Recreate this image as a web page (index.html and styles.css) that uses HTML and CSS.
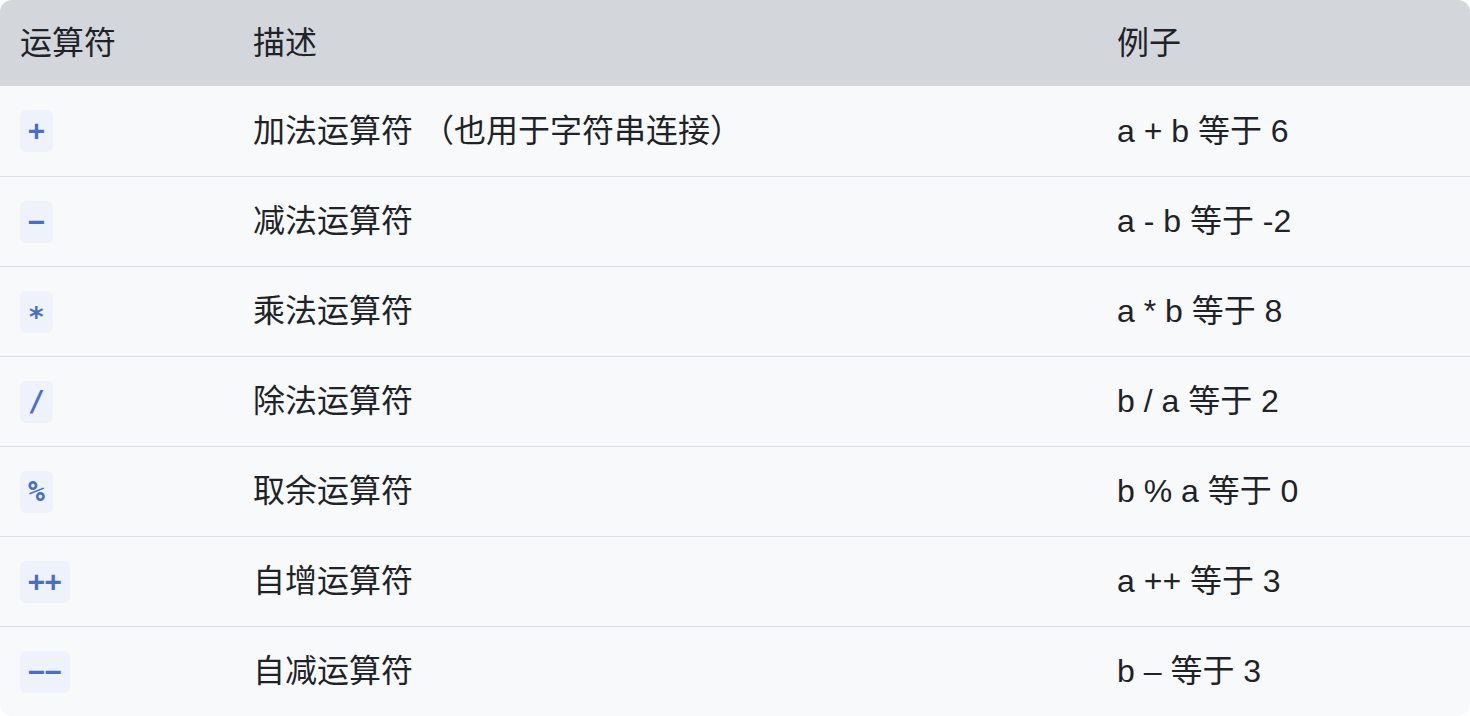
FILE: index.html
```html
<!DOCTYPE html>
<html lang="zh">
<head>
<meta charset="utf-8">
<link rel="stylesheet" href="styles.css">
</head>
<body>
<div class="ops">
  <div class="row head">
    <div class="cell op">运算符</div><div class="cell txt">描述</div><div class="cell txt">例子</div>
  </div>
  <div class="row"><div class="cell op"><code>+</code></div><div class="cell txt">加法运算符 （也用于字符串连接）</div><div class="cell txt">a + b 等于 6</div></div>
  <div class="row"><div class="cell op"><code>−</code></div><div class="cell txt">减法运算符</div><div class="cell txt">a - b 等于 -2</div></div>
  <div class="row"><div class="cell op"><code>∗</code></div><div class="cell txt">乘法运算符</div><div class="cell txt">a * b 等于 8</div></div>
  <div class="row"><div class="cell op"><code>/</code></div><div class="cell txt">除法运算符</div><div class="cell txt">b / a 等于 2</div></div>
  <div class="row"><div class="cell op"><code>%</code></div><div class="cell txt">取余运算符</div><div class="cell txt">b % a 等于 0</div></div>
  <div class="row"><div class="cell op"><code>++</code></div><div class="cell txt">自增运算符</div><div class="cell txt">a ++ 等于 3</div></div>
  <div class="row"><div class="cell op"><code>−−</code></div><div class="cell txt">自减运算符</div><div class="cell txt">b – 等于 3</div></div>
</div>
</body>
</html>
```
FILE: styles.css
```css
html, body {
  margin: 0;
  padding: 0;
  background: #ffffff;
}
.ops {
  width: 1470px;
  height: 716px;
  border-radius: 12px;
  overflow: hidden;
  background: #f8f9fb;
  font-family: "Liberation Sans", "Noto Sans CJK SC", sans-serif;
  font-size: 32px;
  line-height: 40px;
  color: #1f2328;
}
.row {
  display: grid;
  grid-template-columns: 253px 864px 1fr;
  align-items: center;
  height: 90px;
  box-sizing: border-box;
  border-top: 1px solid #dcdee2;
}
.row.head {
  height: 86px;
  background: #d3d7db;
  border-top: none;
}
.row.head + .row {
  border-top: none;
}
.cell.op {
  padding-left: 20px;
}
.cell.txt {
  padding-bottom: 1px;
}
.row.head .cell {
  padding-bottom: 0;
}
.ops code {
  display: inline-block;
  font-family: "DejaVu Sans Mono", monospace;
  font-size: 28px;
  font-weight: 700;
  line-height: 42px;
  height: 42px;
  padding: 0 8px;
  border-radius: 6px;
  background: #edf2fb;
  color: #4a6fc2;
  vertical-align: top;
}
```
